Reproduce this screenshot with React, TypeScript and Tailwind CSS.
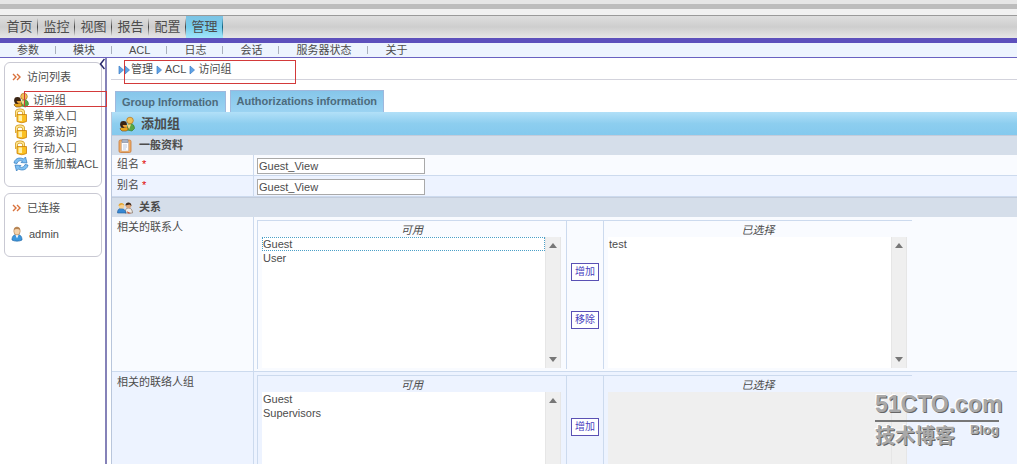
import { useState } from 'react';
import type { ReactNode } from 'react';

const mainMenu = ['首页', '监控', '视图', '报告', '配置', '管理'];
const subMenu = ['参数', '模块', 'ACL', '日志', '会话', '服务器状态', '关于'];

function GroupIcon() {
  return (
    <svg viewBox="0 0 16 16" className="size-4 shrink-0">
      <path d="M8 14c0-4 1-6.500 3.500-6.500S15.500 10 15.500 12.500L13 15z" fill="#58a845" stroke="#2f7a2a" strokeWidth=".6" />
      <circle cx="11" cy="4.500" r="3.300" fill="#f0c057" stroke="#b5731c" strokeWidth=".7" />
      <path d="M8 8.500h4l-2 5z" fill="#f6d98a" />
      <path d="M1 13c1-3 7-3 8.500 0l-2 2H3z" fill="#e8a61d" stroke="#6f4510" strokeWidth=".6" />
      <circle cx="4.500" cy="8.500" r="3.400" fill="#3a2413" />
      <path d="M3.500 9h4.500v2.500H5z" fill="#e9a23b" />
    </svg>
  );
}

function LockIcon() {
  return (
    <svg viewBox="0 0 16 16" className="size-4 shrink-0">
      <path d="M3.500 9V4.500Q3.500 2 7 2T10.500 4.500V7" fill="none" stroke="#cf9418" strokeWidth="3" />
      <path d="M3.500 9V4.500Q3.500 2 7 2T10.500 4.500V7" fill="none" stroke="#ffe68f" strokeWidth="1.600" />
      <path d="M4 6.500h9.500v7q-4.500 2.500-9.500 0z" fill="#fbc021" stroke="#c9800c" strokeWidth=".8" />
      <path d="M5.500 7.500h3.500v5.500H5.500z" fill="#fff0a8" />
    </svg>
  );
}

function ReloadIcon() {
  return (
    <svg viewBox="0 0 16 16" className="size-4 shrink-0">
      <g fill="#7fc0f2" stroke="#2f78bd" strokeWidth=".7" strokeLinejoin="round">
        <path d="M1 7C1.500 3 6 .5 10.500 3L12.500 1l1.500 6-6-.5 1.500-1.500C7 4 4.500 5 4 7.500z" />
        <path d="M15 9c-.5 4-5 6.500-9.500 4L3.500 15 2 9l6 .5L6.500 11c2.500 1 5 0 5.500-2.500z" />
      </g>
    </svg>
  );
}

function UserIcon() {
  return (
    <svg viewBox="0 0 16 16" className="size-4 shrink-0">
      <path d="M3 14c0-4 2-5.500 5-5.500s5 1.500 5 5.500c-2 1.500-8 1.500-10 0z" fill="#3d97dc" stroke="#2469a8" strokeWidth=".7" />
      <path d="M6.500 9h3L8 12.500z" fill="#fff" />
      <ellipse cx="8" cy="5" rx="3.200" ry="4" fill="#f5d3ab" stroke="#bd8c5d" strokeWidth=".7" />
      <path d="M4.800 4C5 0 11 0 11.200 4 9.500 2.800 6.500 2.800 4.800 4z" fill="#b58353" />
    </svg>
  );
}

function ClipboardIcon() {
  return (
    <svg viewBox="0 0 16 16" className="size-4 shrink-0">
      <rect x="2" y="2" width="12" height="12.500" rx="1.500" fill="#f0ac66" stroke="#c77a38" strokeWidth=".8" />
      <path d="M4.500 4h7v9h-7z" fill="#fdfdff" stroke="#b9a8a0" strokeWidth=".5" />
      <path d="M5 1.500h6v3H5z" fill="#a9b2c4" stroke="#77809a" strokeWidth=".5" />
      <path d="M6 7h4M6 9h4M6 11h3" stroke="#a8bbdc" strokeWidth=".8" />
    </svg>
  );
}

function PeopleIcon() {
  return (
    <svg viewBox="0 0 16 16" className="size-4 shrink-0">
      <path d="M8 13c0-3 1-5 3.500-5s4 2 4 5z" fill="#efece8" stroke="#75604c" strokeWidth=".6" />
      <circle cx="11.500" cy="5.500" r="2.800" fill="#dba477" />
      <path d="M8.500 5.500c0-4 6-4 6 .5l-2-1.500z" fill="#3b2a20" />
      <path d="M.5 13c0-3 1-4.500 3.500-4.500S8.500 10 9 13z" fill="#3688d4" stroke="#205b99" strokeWidth=".6" />
      <circle cx="4.500" cy="6" r="2.600" fill="#f7cf8f" />
      <path d="M1.500 6c0-4 5.500-4 6-.5L5 4.500z" fill="#e4a531" />
      <path d="M9.500 11l1.500 2.500h3z" fill="#c9502e" />
    </svg>
  );
}

function Chevrons() {
  return (
    <svg viewBox="0 0 9 8" className="h-2 w-[9px] shrink-0" fill="none" stroke="#d9713a" strokeWidth="1.400">
      <path d="M1 1l3 3-3 3M5 1l3 3-3 3" />
    </svg>
  );
}

function Arrow() {
  return (
    <svg viewBox="0 0 6 10" className="h-2.5 w-1.5 shrink-0">
      <path d="M1 1l4.500 4L1 9z" fill="#5fa4e6" stroke="#3d7cc4" strokeWidth=".7" />
    </svg>
  );
}

function SideBox({ title, children }: { title: string; children: ReactNode }) {
  return (
    <section className="rounded-md border border-[#c9c9d3] bg-white pt-1.5 pb-3.5">
      <h2 className="flex h-4 items-center gap-1.5 pl-[7px]">
        <Chevrons />
        {title}
      </h2>
      {children}
    </section>
  );
}

function SideLink({ icon, label }: { icon: ReactNode; label: string }) {
  return (
    <li>
      <a href="#" className="flex h-4 items-center gap-1 whitespace-nowrap">
        {icon}
        {label}
      </a>
    </li>
  );
}

function SectionHeader({ icon, title }: { icon: ReactNode; title: string }) {
  return (
    <h3 className="flex h-5 items-center gap-1.5 border-t border-[#c3ccdb] bg-[#d5deea] pl-[5px] font-bold">
      {icon}
      {title}
    </h3>
  );
}

function TextRow({ id, label, shade }: { id: string; label: string; shade: string }) {
  const [value, setValue] = useState('Guest_View');
  return (
    <div className={`flex h-[21px] border-b border-[#ccdaee] ${shade}`}>
      <label htmlFor={id} className="w-[142px] shrink-0 border-r border-[#ccdaee] pl-[5px] leading-[18px]">
        {label} <span className="text-[#e00000]">*</span>
      </label>
      <div className="pt-[3px] pl-[3px]">
        <input
          id={id}
          value={value}
          onChange={(e) => setValue(e.target.value)}
          className="block h-4 w-[168px] border border-[#a9a9a9] bg-white px-px outline-none"
        />
      </div>
    </div>
  );
}

function ListBox({ id, options, focused, disabled, bar }: { id: string; options: string[]; focused?: string; disabled?: boolean; bar: boolean }) {
  return (
    <div className="mr-[5px] ml-1 flex h-[131px]">
      <select
        id={id}
        multiple
        disabled={disabled}
        className="block h-full min-w-0 flex-1 appearance-none overflow-hidden rounded-none border-0 bg-white p-0 outline-none disabled:bg-[#efefef]"
      >
        {options.map((o) => (
          <option
            key={o}
            className={`h-3.5 border border-dotted px-0 py-0 leading-3 ${o === focused ? 'border-[#4aa0c8]' : 'border-transparent'}`}
          >
            {o}
          </option>
        ))}
      </select>
      <div className="flex w-4 flex-col items-center justify-between border-x border-[#e6e6e6] bg-[#efefef] py-1.5">
        {bar && (
          <>
            <svg viewBox="0 0 8 5" className="h-[5px] w-2"><path d="M0 5l4-5 4 5z" fill="#777" /></svg>
            <svg viewBox="0 0 8 5" className="h-[5px] w-2"><path d="M0 0l4 5 4-5z" fill="#777" /></svg>
          </>
        )}
      </div>
    </div>
  );
}

function PickRow({ id, label, shade, available, selected, focused }: { id: string; label: string; shade: string; available: string[]; selected: string[]; focused?: string }) {
  const button = 'h-[18px] w-7 border border-[#5a50b4] bg-white text-[10px] leading-4 text-[#4a3fc0]';
  return (
    <div className={`flex border-b border-[#ccdaee] ${shade}`}>
      <div className="w-[142px] shrink-0 border-r border-[#ccdaee] pt-0.5 pl-[5px] leading-4">{label}</div>
      <div className="flex w-[658px] pt-[3px] pb-0.5 pl-[3px]">
        <div className="flex h-[149px] flex-1 border-t border-l border-[#ccdaee]">
          <div className="min-w-0 flex-1">
            <label htmlFor={`${id}-a`} className="block h-4 text-center leading-[18px] italic">可用</label>
            <ListBox id={`${id}-a`} options={available} focused={focused} bar />
          </div>
          <div className="flex w-[38px] flex-col items-center gap-[30px] border-x border-[#ccdaee] pt-[42px]">
            <button className={button}>增加</button>
            <button className={button}>移除</button>
          </div>
          <div className="min-w-0 flex-1">
            <label htmlFor={`${id}-s`} className="block h-4 text-center leading-[18px] italic">已选择</label>
            <ListBox id={`${id}-s`} options={selected} disabled={selected.length === 0} bar={selected.length > 0} />
          </div>
        </div>
      </div>
    </div>
  );
}

export default function App() {
  const [active, setActive] = useState('管理');

  return (
    <div className="relative flex h-screen flex-col overflow-hidden bg-white font-['Liberation_Sans','Noto_Sans_CJK_SC',sans-serif] text-[11px] text-[#4c4c4c]">
      <header className="shrink-0">
        <div className="h-1 bg-[#e6e6e6]" />
        <div className="h-[5px] bg-[#bdbdbd]" />
        <div className="h-1.5 bg-[#f1f1f1]" />
        <nav className="flex h-[23px] border-t border-[#9a9a9a] bg-linear-to-b from-[#dedede] via-[#cecece] to-[#e6e6e6] pl-px text-[13px]">
          {mainMenu.map((m) => (
            <button
              key={m}
              onClick={() => setActive(m)}
              className={`relative w-[37px] whitespace-nowrap ${m === active ? 'bg-linear-to-b from-[#7cc3e4] via-[#76cdec] to-[#a3e6fa]' : ''}`}
            >
              {m}
              <span className={`absolute inset-y-0.5 right-0 w-px bg-linear-to-b from-transparent to-transparent ${m === active ? 'via-[#14607c]' : 'via-[#444]'}`} />
            </button>
          ))}
        </nav>
        <div className="h-[5px] bg-[#5d50bc]" />
        <nav className="flex h-[15px] items-center border-b border-[#6a62c0] bg-[#edf4fe] pl-[17px]">
          {subMenu.map((s, i) => (
            <span key={s} className="flex items-center">
              {i > 0 && <span className="mx-4 h-2 w-0.5 border-l border-[#a9b0bc]" />}
              <a href="#">{s}</a>
            </span>
          ))}
        </nav>
      </header>

      <div className="flex min-h-0 flex-1">
        <aside className="relative flex w-[107px] shrink-0 flex-col gap-1.5 border-r-2 border-[#8582b8] pt-1 pr-[3px] pl-1">
          <svg viewBox="0 0 6 12" className="absolute top-0 right-0 h-3 w-1.5" fill="none" stroke="#26266a" strokeWidth="1.500">
            <path d="M5.500 1L1.500 6l4 5" />
          </svg>
          <SideBox title="访问列表">
            <ul className="pt-[7px] pl-2">
              <SideLink icon={<GroupIcon />} label="访问组" />
              <SideLink icon={<LockIcon />} label="菜单入口" />
              <SideLink icon={<LockIcon />} label="资源访问" />
              <SideLink icon={<LockIcon />} label="行动入口" />
              <SideLink icon={<ReloadIcon />} label="重新加载ACL" />
            </ul>
          </SideBox>
          <SideBox title="已连接">
            <ul className="pt-2.5 pl-1">
              <SideLink icon={<UserIcon />} label="admin" />
            </ul>
          </SideBox>
          {/* highlight on the current entry */}
          <div className="pointer-events-none absolute top-[33px] -right-0.5 left-6 h-4 border border-[#d33a3a]" />
        </aside>

        <main className="min-w-0 flex-1 pl-1">
          <div className="relative flex h-[22px] items-center gap-[3px] border-b border-[#d3d3dc] pt-0.5 pl-[7px]">
            <span className="flex w-2.5"><Arrow /><Arrow /></span>
            <a href="#">管理</a>
            <Arrow />
            <a href="#">ACL</a>
            <Arrow />
            <a href="#">访问组</a>
            <div className="pointer-events-none absolute top-0.5 left-[13px] h-6 w-[172px] border border-[#d33a3a]" />
          </div>

          <div className="flex h-8 items-end gap-1 pl-1 text-[11px] font-bold text-[#4d6b7c]">
            <button className="h-[21px] border border-b-0 border-[#9fb8dd] bg-linear-to-b from-[#86c6ea] to-[#9bd3f2] px-1.5">Group Information</button>
            <button className="h-[22px] border border-b-0 border-[#9fb8dd] bg-linear-to-b from-[#86c6ea] to-[#9bd3f2] px-1.5">Authorizations information</button>
          </div>

          <form className="border-l border-[#b9c6dc]" onSubmit={(e) => e.preventDefault()}>
            <h1 className="flex h-[23px] items-center gap-1.5 bg-linear-to-b from-[#b2e0f8] via-[#8dceef] to-[#84c9ee] pl-[7px] text-[13px] font-bold">
              <GroupIcon />
              添加组
            </h1>
            <SectionHeader icon={<ClipboardIcon />} title="一般资料" />
            <TextRow id="name" label="组名" shade="bg-[#f9fbff]" />
            <TextRow id="alias" label="别名" shade="bg-[#edf3ff]" />
            <SectionHeader icon={<PeopleIcon />} title="关系" />
            <PickRow id="contacts" label="相关的联系人" shade="bg-[#f9fbff]" available={['Guest', 'User']} selected={['test']} focused="Guest" />
            <PickRow id="groups" label="相关的联络人组" shade="bg-[#edf3ff]" available={['Guest', 'Supervisors']} selected={[]} />
          </form>
        </main>
      </div>

      {/* blog stamp */}
      <div className="pointer-events-none absolute right-[18px] bottom-3.5 w-[124px] font-bold text-[#a9a9a9] [text-shadow:1px_1px_0_#666,-1px_-1px_0_#fff]">
        <div className="border-b-2 border-[#777] pb-1 text-[23px] leading-6">51CTO.com</div>
        <div className="flex justify-between">
          <span className="text-[20px] leading-7">技术博客</span>
          <span className="text-[13px] leading-4">Blog</span>
        </div>
      </div>
    </div>
  );
}
